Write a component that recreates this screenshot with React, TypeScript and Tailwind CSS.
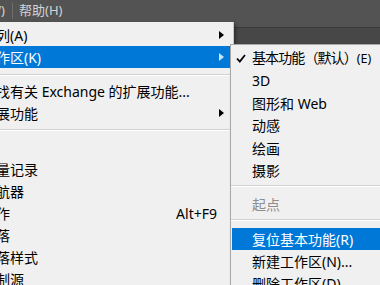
import React from "react";

const font = { fontFamily: '"Noto Sans", "Noto Sans CJK SC", sans-serif' };

function Arrow({ light }: { light?: boolean }) {
  return (
    <svg width="5" height="8" viewBox="0 0 5 8" aria-hidden>
      <path d="M0 0 L5 4 L0 8 Z" fill={light ? "#cde5fb" : "#000"} />
    </svg>
  );
}

function Check() {
  return (
    <svg width="10" height="9" viewBox="0 0 10 9" aria-hidden>
      <path d="M1 4.5 L3.8 7.5 L9 1" stroke="#000" strokeWidth="1.8" fill="none" />
    </svg>
  );
}

function Row({ text, arrow, shortcut, active }: { text: string; arrow?: boolean; shortcut?: string; active?: boolean }) {
  return (
    <div className={`flex h-[22px] items-center pl-[12px] pr-[9px] ${active ? "bg-[#0078d7] text-white" : "text-black"}`}>
      <span className="flex-1 whitespace-nowrap">{text}</span>
      {shortcut && <span className="whitespace-nowrap">{shortcut}</span>}
      <div className="flex w-[7px] justify-end">{arrow && <Arrow light={active} />}</div>
    </div>
  );
}

function SubRow({ children, check, active, disabled, tall }: { children: React.ReactNode; check?: boolean; active?: boolean; disabled?: boolean; tall?: boolean }) {
  const color = active ? "bg-[#0078d7] text-white" : disabled ? "text-[#8d8d8d]" : "text-black";
  return (
    <div className={`mx-[1px] flex ${tall ? "h-[22.5px]" : "h-[22px]"} items-center ${color}`}>
      <div className="flex w-[20px] pl-[4px]">{check && <Check />}</div>
      <span className="whitespace-nowrap">{children}</span>
    </div>
  );
}

function Sep({ cls }: { cls: string }) {
  return (
    <div className={cls}>
      <div className="h-px bg-[#d2d2d2]" />
      <div className="h-px bg-white" />
    </div>
  );
}

export default function App() {
  return (
    <div className="relative h-[285px] w-[380px] overflow-hidden bg-[#474747] text-[14px]" style={font}>
      {/* menu bar + options strip */}
      <div className="h-[28px] border-b border-[#3a3a3a] bg-[#535353]">
        <div className="flex h-[22px] items-center text-[13px] text-[#d4d4d4]">
          <div className="flex w-[5px] justify-end overflow-hidden">
            <span className="whitespace-nowrap">窗口(W)</span>
          </div>
          <div className="ml-[7px] h-[16px] w-px bg-[#6e6e6e]" />
          <span className="ml-[6px]">帮助(H)</span>
        </div>
      </div>

      {/* window menu */}
      <div className="absolute left-[-30px] top-[22px] h-[280px] w-[264px] border-r border-[#c8c8c8] bg-[#f0f0f0] pt-[2px] shadow-[2px_2px_3px_rgba(0,0,0,0.35)]">
        <Row text="排列(A)" arrow />
        <Row text="工作区(K)" arrow active />
        <Sep cls="h-[12px] pt-[6px]" />
        <Row text="查找有关 Exchange 的扩展功能..." />
        <Row text="扩展功能" arrow />
        <Sep cls="h-[12px] pt-[5px]" />
        <Row text="3D" />
        <Row text="测量记录" />
        <Row text="导航器" />
        <Row text="动作" shortcut="Alt+F9" />
        <Row text="段落" />
        <Row text="段落样式" />
        <Row text="仿制源" />
      </div>

      {/* workspace submenu */}
      <div className="absolute left-[230px] top-[44px] h-[260px] w-[170px] border border-[#a8a8a8] bg-[#f0f0f0] pt-[2px] shadow-[2px_2px_3px_rgba(0,0,0,0.35)]">
        <SubRow check tall>
          <span className="tracking-[-0.9px]">
            基本功能（默认）<span className="text-[12.5px] tracking-normal">(E)</span>
          </span>
        </SubRow>
        <SubRow tall>3D</SubRow>
        <SubRow tall>图形和 Web</SubRow>
        <SubRow tall>动感</SubRow>
        <SubRow tall>绘画</SubRow>
        <SubRow tall>摄影</SubRow>
        <Sep cls="h-[11px] pt-[3px]" />
        <SubRow disabled>起点</SubRow>
        <Sep cls="h-[13px] pt-[4px]" />
        <SubRow active>复位基本功能(R)</SubRow>
        <SubRow>新建工作区(N)...</SubRow>
        <SubRow>删除工作区(D)...</SubRow>
      </div>
    </div>
  );
}
